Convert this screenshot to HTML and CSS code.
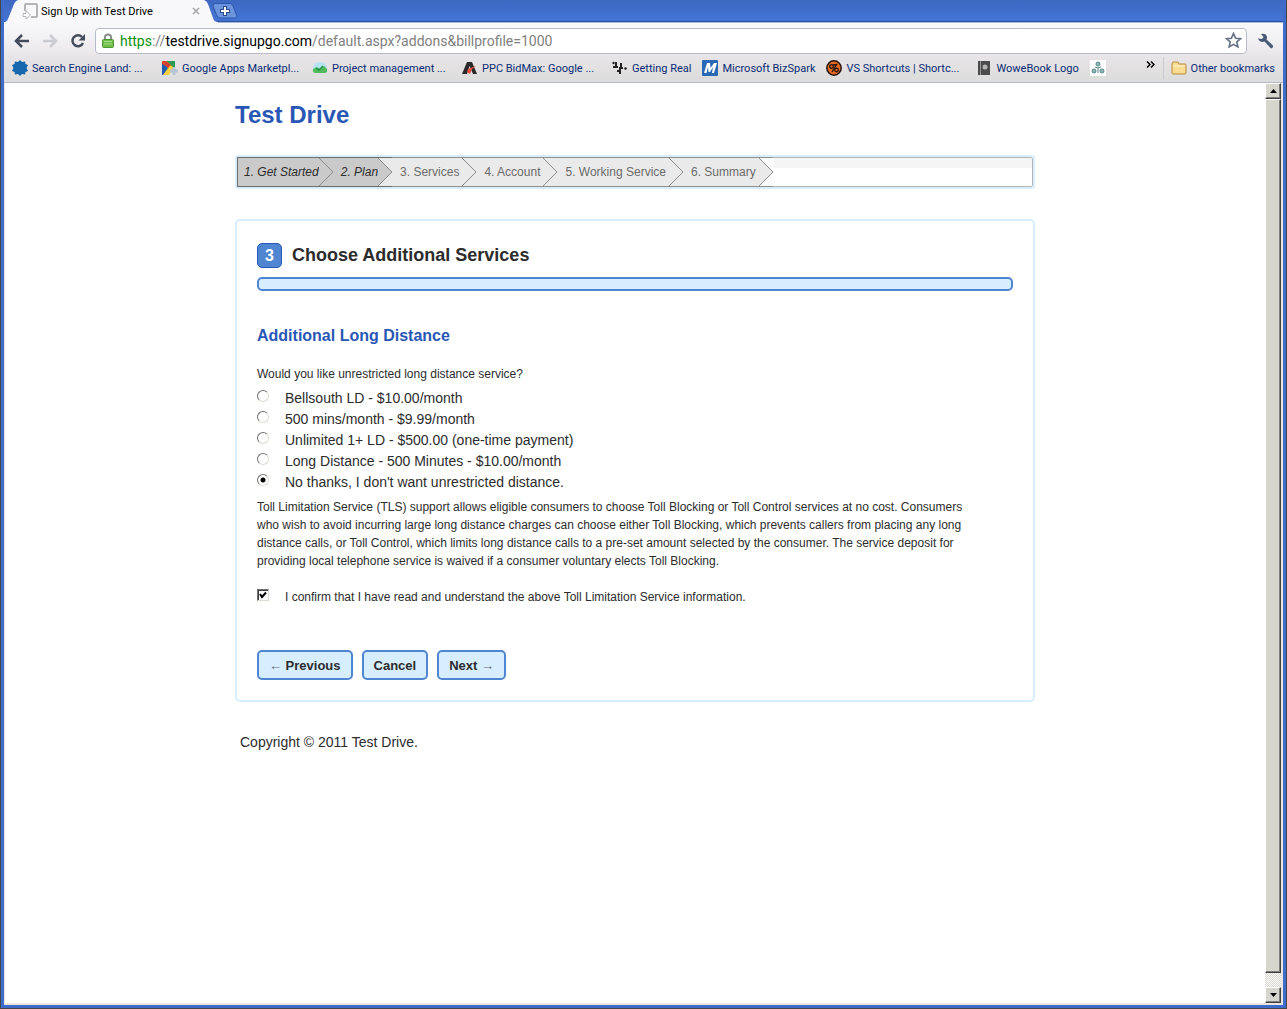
FILE: index.html
```html
<!DOCTYPE html>
<html lang="en">
<head>
<meta charset="utf-8">
<title>Sign Up with Test Drive</title>
<link rel="stylesheet" href="styles.css">
</head>
<body>
<div class="window">
  <header class="chrome">
    <div class="tabstrip">
      <svg class="tab-edge" width="15" height="24" viewBox="0 0 15 24"><path d="M0 24V22Q3 22 4 19L10 4Q12 0 15 0V24Z" fill="#f8f8fa"/></svg>
      <div class="tab">
        <svg width="18" height="18" viewBox="0 0 18 18" fill="none" stroke="#b4b4b4" stroke-width="2"><path d="M3 9V3Q3 2 4 2H14Q15 2 15 3V14Q15 15 14 15H9"/><path d="M1 11.500H4V8.500L8.500 13L4 17V14.500H1Z" stroke-width="1" fill="#fff"/></svg>
        <span class="tab-title">Sign Up with Test Drive</span>
        <button class="plain" aria-label="Close tab"><svg width="8" height="8" viewBox="0 0 8 8" stroke="#a4a4a4" stroke-width="1.500"><path d="M1 1L7 7M7 1L1 7"/></svg></button>
      </div>
      <svg class="tab-edge" width="14" height="24" viewBox="0 0 14 24"><path d="M0 24V0Q3 1 4 4L9 18Q10 22 14 22V24Z" fill="#f8f8fa"/></svg>
      <button class="plain newtab" aria-label="New tab"><svg width="26" height="16" viewBox="0 0 26 16"><path d="M3 .500H18Q20 .500 21 3L25 13Q25 15 23 15H8Q6 15 5 13L1 3Q1 .500 3 .500Z" fill="#6c93de" stroke="#2c56a8"/><path d="M13 3V13M8 8H18" stroke="#294c8d" stroke-width="4"/><path d="M13 4V12M9 8H17" stroke="#fff" stroke-width="2"/></svg></button>
    </div>
    <div class="toolbar">
      <button class="plain" aria-label="Back"><svg width="16" height="14" viewBox="0 0 16 14" fill="none" stroke="#434c5c" stroke-width="2.500"><path d="M8 1L2 7L8 13M2 7H15"/></svg></button>
      <button class="plain" aria-label="Forward"><svg width="16" height="14" viewBox="0 0 16 14" fill="none" stroke="#c9cbd0" stroke-width="2.500"><path d="M8 1L14 7L8 13M14 7H1"/></svg></button>
      <button class="plain" aria-label="Reload"><svg width="16" height="16" viewBox="0 0 16 16"><path d="M12 4A5.500 5.500 0 1 0 13 10" fill="none" stroke="#434c5c" stroke-width="2.500"/><path d="M15 1V7.500H8.500Z" fill="#434c5c"/></svg></button>
      <div class="address">
        <svg width="12" height="15" viewBox="0 0 12 15"><path d="M3 7V4Q3 1.500 6 1.500T9 4V7" fill="none" stroke="#8b8f8b" stroke-width="2"/><rect x=".5" y="6.500" width="11" height="8" rx="1" fill="#70bf4c" stroke="#4d9a35"/><path d="M2 8.500H10M2 11H10" stroke="#a6dd86"/></svg>
        <div class="url"><span class="secure">https</span>://<span class="host">testdrive.signupgo.com</span>/default.aspx?addons&amp;billprofile=1000</div>
        <button class="plain" aria-label="Bookmark this page"><svg width="17" height="17" viewBox="0 0 17 17"><path d="M8.500 1.500L10.600 6.200L15.500 6.700L11.800 10L12.900 15L8.500 12.400L4.100 15L5.200 10L1.500 6.700L6.400 6.200Z" fill="#fff" stroke="#667084" stroke-width="1.600"/></svg></button>
      </div>
      <button class="plain" aria-label="Customize"><svg width="17" height="16" viewBox="0 0 17 16"><path d="M4 1Q9 0 10 4Q10 6 9.500 6.500L16 12.500Q16.500 15 14 15.500L7.500 8.500Q3 10 1 5.500L5 6L6.500 4Z" fill="#4a5a76"/></svg></button>
    </div>
    <nav class="bookmarks" aria-label="Bookmarks">
      <a class="mark wide" href="#"><svg width="16" height="16" viewBox="0 0 16 16" fill="#1667ad"><path d="M8 0L10 2L13 1.500L13.500 4L16 5L14.500 8L16 11L13.500 12L13 14.500L10 14L8 16L6 14L3 14.500L2.500 12L0 11L1.500 8L0 5L2.500 4L3 1.500L6 2Z"/></svg>Search Engine Land: ...</a>
      <a class="mark wide" href="#"><svg width="16" height="16" viewBox="0 0 16 16"><path d="M0 1H13V8L5 15H0Z" fill="#225cae"/><path d="M0 1H4L6 7L0 4Z" fill="#d63c2e"/><path d="M4 1H13V7L9 8Z" fill="#2b9b55"/><path d="M0 1H4L12 8L7 15H1L6 8Z" fill="#f8cf3e"/><path d="M0 1H4L9 5L6 8Z" fill="#d63c2e"/><path d="M12 7V15M8 11H16" stroke="#b6c6d9" stroke-width="3"/></svg>Google Apps Marketpl...</a>
      <a class="mark wide" href="#"><svg width="16" height="16" viewBox="0 0 16 16"><path d="M1 10Q1 2 8 2T15 10Z" fill="#b7e2f2"/><path d="M1 9L5 7L8 9L12 6L15 9Q16 13 12 13H4Q0 13 1 9Z" fill="#4fba5a"/><path d="M4 8L7 10L11 6" fill="none" stroke="#23924a" stroke-width="1.500"/></svg>Project management ...</a>
      <a class="mark wide" href="#"><svg width="16" height="16" viewBox="0 0 16 16"><path d="M0 14L5 2H10L15 14H11L7.500 6L5 14Z" fill="#292929"/><path d="M6 9L14 6L10 9L8 14L5 12Z" fill="#e94c38"/></svg>PPC BidMax: Google ...</a>
      <a class="mark" href="#"><svg width="16" height="16" viewBox="0 0 16 16" fill="none" stroke="#222" stroke-width="2"><path d="M4 2V8M1 7H6M9 3V7M7 8H11M5 11H8M8 9V14"/><circle cx="13.500" cy="8.500" r="1.300" fill="#222" stroke="none"/><circle cx="1.500" cy="3" r="1.200" fill="#222" stroke="none"/></svg>Getting Real</a>
      <a class="mark" href="#"><svg width="16" height="16" viewBox="0 0 16 16"><rect width="16" height="16" rx="1" fill="#2868b4"/><path d="M2 13L5 3H8L8.500 8L12 3H15L12 13H10L11 7L8 12H6.500L6 7L4.500 13Z" fill="#fff"/></svg>Microsoft BizSpark</a>
      <a class="mark wide" href="#"><svg width="16" height="16" viewBox="0 0 16 16"><circle cx="8" cy="8" r="7.200" fill="#e66a20" stroke="#22150d" stroke-width="1.500"/><g fill="none" stroke="#22150d" stroke-width="1.300"><circle cx="5.500" cy="6.500" r="1.800"/><circle cx="10.500" cy="10" r="1.800"/><path d="M7 5L10.500 4.500L6 12"/></g></svg>VS Shortcuts | Shortc...</a>
      <a class="mark" href="#"><svg width="16" height="16" viewBox="0 0 16 16"><rect x="2" y="1" width="12" height="14" fill="#4b4b4b"/><path d="M4.500 1V15" stroke="#999"/><circle cx="9" cy="7" r="2.500" fill="#b5b5b5"/></svg>WoweBook Logo</a>
      <a class="mark" href="#" aria-label="Bookmark"><svg width="16" height="16" viewBox="0 0 16 16"><path d="M0 0H16V16H0Z" fill="#fff"/><g fill="#8fb9b8" stroke="#57898c"><circle cx="8" cy="4" r="2"/><circle cx="4" cy="11" r="2"/><circle cx="12" cy="11" r="2"/><path d="M5 7L8 8L11 7M8 8V13" fill="none"/></g></svg></a>
      <button class="plain more" aria-label="More bookmarks"><svg width="9" height="7" viewBox="0 0 9 7" fill="none" stroke="#000" stroke-width="1.500"><path d="M1 .500L4 3.500L1 6.500M5 .500L8 3.500L5 6.500"/></svg></button>
      <a class="mark other" href="#"><svg width="16" height="14" viewBox="0 0 16 14"><path d="M1 3V12Q1 13 2 13H14Q15 13 15 12V4Q15 3 14 3H8L7 1H2Q1 1 1 3Z" fill="#f9dc93" stroke="#b8893b"/><path d="M2 5H14" stroke="#fff3cc"/></svg>Other bookmarks</a>
    </nav>
  </header>

  <div class="viewport">
    <div class="page">
      <h1>Test Drive</h1>
      <ol class="steps">
        <li class="done">1. Get Started<svg width="15" height="28" viewBox="0 0 15 28"><path class="next" d="M0 0H15V28H0Z"/><path class="cur" d="M0 0L14 14L0 28Z"/><path class="line" d="M0 0L14 14L0 28"/></svg></li>
        <li class="done last">2. Plan<svg width="15" height="28" viewBox="0 0 15 28"><path class="next" d="M0 0H15V28H0Z"/><path class="cur" d="M0 0L14 14L0 28Z"/><path class="line" d="M0 0L14 14L0 28"/></svg></li>
        <li>3. Services<svg width="15" height="28" viewBox="0 0 15 28"><path class="line" d="M0 0L14 14L0 28"/></svg></li>
        <li>4. Account<svg width="15" height="28" viewBox="0 0 15 28"><path class="line" d="M0 0L14 14L0 28"/></svg></li>
        <li>5. Working Service<svg width="15" height="28" viewBox="0 0 15 28"><path class="line" d="M0 0L14 14L0 28"/></svg></li>
        <li>6. Summary<svg width="15" height="28" viewBox="0 0 15 28"><path class="next" d="M0 0H15V28H0Z"/><path class="cur" d="M0 0L14 14L0 28Z"/><path class="line" d="M0 0L14 14L0 28"/></svg></li>
      </ol>

      <form class="panel">
        <h2><span class="badge">3</span>Choose Additional Services</h2>
        <div class="bar"></div>
        <h3>Additional Long Distance</h3>
        <fieldset>
          <legend>Would you like unrestricted long distance service?</legend>
          <label class="choice"><input type="radio" name="ld">Bellsouth LD - $10.00/month</label>
          <label class="choice"><input type="radio" name="ld">500 mins/month - $9.99/month</label>
          <label class="choice"><input type="radio" name="ld">Unlimited 1+ LD - $500.00 (one-time payment)</label>
          <label class="choice"><input type="radio" name="ld">Long Distance - 500 Minutes - $10.00/month</label>
          <label class="choice"><input type="radio" name="ld" checked>No thanks, I don't want unrestricted distance.</label>
        </fieldset>
        <p class="terms">Toll Limitation Service (TLS) support allows eligible consumers to choose Toll Blocking or Toll Control services at no cost. Consumers who wish to avoid incurring large long distance charges can choose either Toll Blocking, which prevents callers from placing any long distance calls, or Toll Control, which limits long distance calls to a pre-set amount selected by the consumer. The service deposit for providing local telephone service is waived if a consumer voluntary elects Toll Blocking.</p>
        <label class="choice confirm"><input type="checkbox" checked>I confirm that I have read and understand the above Toll Limitation Service information.</label>
        <div class="actions">
          <button type="button"><span class="arrow">←</span> Previous</button>
          <button type="button">Cancel</button>
          <button type="button">Next <span class="arrow">→</span></button>
        </div>
      </form>
      <footer>Copyright © 2011 Test Drive.</footer>
    </div>
    <div class="scrollbar">
      <button class="scroll-btn" aria-label="Scroll up"><svg width="7" height="4" viewBox="0 0 7 4"><path d="M0 4L3.500 0L7 4Z"/></svg></button>
      <div class="thumb"></div>
      <div class="track"></div>
      <button class="scroll-btn" aria-label="Scroll down"><svg width="7" height="4" viewBox="0 0 7 4"><path d="M0 0L3.500 4L7 0Z"/></svg></button>
    </div>
  </div>
</div>
</body>
</html>
```
FILE: styles.css
```css
* { box-sizing: border-box; }
body {
  margin: 0;
  font-family: "Liberation Sans", Arial, sans-serif;
  color: #2c2c2c;
  background: #fff;
}
svg { display: block; flex: none; }
.plain {
  padding: 0;
  border: 0;
  background: none;
}

/* Browser window */
.window {
  display: flex;
  flex-direction: column;
  min-height: 100vh;
  padding: 0 3px 3px;
  border: 1px solid #454545;
  border-top: 0;
  background: #3e6ccb;
}
.chrome { font-family: Roboto, sans-serif; font-size: 11px; }
.tabstrip {
  display: flex;
  height: 24px;
  background: linear-gradient(#3c68c1, #4474d4 85%, #2950a0 90%, #f8f8fa 96%);
}
.tab {
  display: flex;
  align-items: center;
  width: 185px;
  padding: 0 4px 2px 3px;
  background: #f8f8fa;
  color: #000;
}
.tab-title { flex: 1; padding-left: 1px; white-space: nowrap; }
.newtab { align-self: flex-start; padding-top: 3px; margin-left: -6px; }
.toolbar {
  display: flex;
  align-items: center;
  gap: 12px;
  height: 30px;
  padding: 3px 9px 0 10px;
  background: linear-gradient(#f8f8fa, #ebe8ec);
}
.address {
  display: flex;
  flex: 1;
  align-items: center;
  gap: 6px;
  height: 26px;
  margin: 0 -2px 0 -3px;
  padding: 0 4px 0 6px;
  border: 1px solid #b7bbc9;
  border-radius: 4px;
  background: #fff;
}
.url {
  flex: 1;
  font-size: 14px;
  color: #808080;
  white-space: nowrap;
}
.secure { color: #0a910a; }
.host { color: #000; }
.bookmarks {
  display: flex;
  align-items: center;
  height: 29px;
  padding: 0 8px;
  border-bottom: 1px solid #b4b7c6;
  background: linear-gradient(#e9e5e8, #dcdcdc);
}
.mark {
  display: flex;
  align-items: center;
  gap: 4px;
  margin-right: 11px;
  color: #092c76;
  text-decoration: none;
  white-space: nowrap;
}
.mark.wide { width: 139px; }
.more { align-self: flex-start; margin: 7px 8px 0 auto; }
.mark.other {
  height: 22px;
  margin-right: 0;
  padding-left: 7px;
  border-left: 1px solid #cacad2;
}
.viewport {
  display: flex;
  flex: 1;
  border: solid #e8e6df;
  border-width: 0 2px 2px 1px;
  background: #fff;
}

/* Sign-up page */
.page {
  width: 100%;
  max-width: 800px;
  margin: 0 auto;
  font-size: 14px;
}
h1 {
  margin: 18px 0 26px;
  font-size: 24px;
  line-height: 28px;
  color: #2857b5;
}
.steps {
  display: flex;
  height: 34px;
  margin: 0 0 30px;
  padding: 0;
  border: 2px solid #d6eeff;
  border-radius: 4px;
  list-style: none;
  font-size: 12px;
  color: #6b6b6b;
  background: linear-gradient(#f5f5f5 36%, #fff 36%);
  box-shadow: inset 0 0 0 1px #b4b4b4;
}
.steps li {
  display: flex;
  align-items: center;
  padding-left: 8px;
  border: solid #929292;
  border-width: 1px 0;
  background: #eaeaea;
}
.steps svg { margin-left: 3px; margin-right: -1px; }
.steps .done svg { margin-left: 0; }
.steps .done {
  border-color: #6d6d6d;
  font-style: italic;
  color: #2c2c2c;
  background: #cacaca;
}
.steps li:first-child { padding-left: 6px; border-left-width: 1px; }
.line { fill: none; stroke: #8c8c8c; }
.cur { fill: #eaeaea; }
.next { fill: #fbfbfb; }
.done .cur, .done .next { fill: #cacaca; }
.done.last .next { fill: #eaeaea; }

.panel {
  padding: 22px 20px 20px;
  border: 2px solid #d6eeff;
  border-radius: 5px;
}
h2 {
  display: flex;
  align-items: center;
  gap: 10px;
  margin: 0 0 9px;
  font-size: 18px;
  line-height: 25px;
}
.badge {
  width: 25px;
  height: 25px;
  border: 1px solid #2857b5;
  border-radius: 5px;
  font-size: 16px;
  line-height: 23px;
  text-align: center;
  color: #fff;
  background: #5085d1;
}
.bar {
  height: 14px;
  border: 2px solid #5085d1;
  border-radius: 5px;
  background: #d6eeff;
}
h3 {
  margin: 35px 0 19px;
  font-size: 16px;
  line-height: 20px;
  color: #2857b5;
}
fieldset { margin: 0; padding: 0; border: 0; }
legend {
  margin-bottom: 5px;
  padding: 0;
  font-size: 12px;
  line-height: 18px;
}
.choice {
  display: flex;
  align-items: center;
  gap: 16px;
  line-height: 21px;
}
.choice input {
  appearance: none;
  flex: none;
  width: 12px;
  height: 12px;
  margin: 0 0 6px;
  border: 1px solid;
  border-color: #707070 #dedbd2 #dedbd2 #707070;
  background: #fff center no-repeat;
}
.choice input[type="radio"] { border-radius: 50%; }
.choice input[type="radio"]:checked {
  background-image: radial-gradient(circle, #000 2px, transparent 3px);
}
.choice input[type="checkbox"] {
  box-shadow: inset 1px 1px #404040;
  background-image: url("data:image/svg+xml,%3Csvg xmlns='http://www.w3.org/2000/svg' width='8' height='8'%3E%3Cpath d='M1 3L3 6L7 1.500' fill='none' stroke='%23000' stroke-width='2'/%3E%3C/svg%3E");
}
.terms {
  max-width: 724px;
  margin: 5px 0 17px;
  font-size: 12px;
  line-height: 18px;
}
.confirm { font-size: 12px; }
.actions {
  display: flex;
  gap: 9px;
  margin-top: 42px;
}
.actions button {
  height: 30px;
  padding: 0 10px;
  border: 2px solid #5085d1;
  border-radius: 5px;
  font: bold 13px "Liberation Sans", Arial, sans-serif;
  color: #2c2c2c;
  background: #d6eeff;
}
.arrow { font-weight: normal; color: #666; }
footer { padding: 31px 5px; line-height: 18px; }

/* Scrollbar */
.scrollbar {
  display: flex;
  flex-direction: column;
  flex: none;
  width: 16px;
}
.scroll-btn, .thumb {
  border: 1px solid;
  border-color: #fff #404040 #404040 #fff;
  box-shadow: inset -1px -1px #808080;
  background: #d6d5ce;
}
.scroll-btn {
  display: grid;
  place-items: center;
  height: 16px;
  padding: 0;
}
.thumb { flex: 1; }
.track {
  height: 14px;
  background: repeating-conic-gradient(#d6d5ce 0 25%, #fff 0 50%) 0 0 / 2px 2px;
}
```
